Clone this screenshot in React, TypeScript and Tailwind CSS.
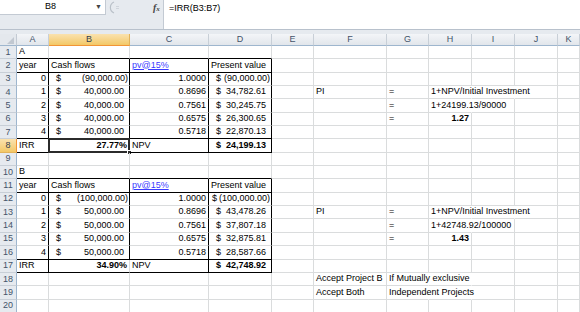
import clsx from "clsx";

type C = {
  v?: string;
  al?: "l" | "r";
  acct?: string;
  tight?: boolean;
  bold?: boolean;
  link?: boolean;
  dr?: boolean;
  db?: boolean;
  hr?: boolean;
  sel?: boolean;
};

const widths = [
  "w-[32px]",
  "w-[81px]",
  "w-[79px]",
  "w-[63px]",
  "w-[42px]",
  "w-[73px]",
  "w-[42px]",
  "w-[43px]",
  "w-[43px]",
  "w-[43px]",
  "w-[22px]",
];
const letters = ["A", "B", "C", "D", "E", "F", "G", "H", "I", "J", "K"];

const money = (n: string, o: Partial<C> = {}): C => ({ acct: n, dr: true, ...o });
const num = (n: string, o: Partial<C> = {}): C => ({ v: n, al: "r", dr: true, ...o });

function section(
  title: string,
  flows: string[],
  pvs: string[],
  irr: string,
  npv: string,
  sel: boolean
): Record<number, C>[] {
  const factors = ["1.0000", "0.8696", "0.7561", "0.6575", "0.5718"];
  const rows: Record<number, C>[] = [];
  rows.push({ 0: { v: title, db: true }, 1: { db: true }, 2: { db: true }, 3: { db: true } });
  rows.push({
    0: { v: "year", dr: true, db: true },
    1: { v: "Cash flows", dr: true, db: true },
    2: { v: "pv@15%", link: true, dr: true, db: true },
    3: { v: "Present value", dr: true, db: true },
  });
  for (let i = 0; i < 5; i++) {
    const db = i === 4;
    rows.push({
      0: num(String(i), { db }),
      1: money(flows[i], { db }),
      2: num(factors[i], { db }),
      3: money(pvs[i], { db, tight: pvs[i].length > 11 }),
    });
  }
  rows.push({
    0: { v: "IRR", dr: true, db: true },
    1: { v: irr, al: "r", bold: true, db: true, dr: sel, sel },
    2: { v: "NPV", dr: true, db: true },
    3: money(npv, { bold: true, db: true }),
  });
  return rows;
}

const secA = section(
  "A",
  ["(90,000.00)", "40,000.00", "40,000.00", "40,000.00", "40,000.00"],
  ["(90,000.00)", "34,782.61", "30,245.75", "26,300.65", "22,870.13"],
  "27.77%",
  "24,199.13",
  true
);
const secB = section(
  "B",
  ["(100,000.00)", "50,000.00", "50,000.00", "50,000.00", "50,000.00"],
  ["(100,000.00)", "43,478.26", "37,807.18", "32,875.81", "28,587.66"],
  "34.90%",
  "42,748.92",
  false
);

const rows: Record<number, C>[] = [...secA, {}, ...secB, {}, {}, {}];

// right hand notes
Object.assign(rows[3], {
  5: { v: "PI" },
  6: { v: "=" },
  7: { v: "1+NPV/Initial Investment", hr: true },
  8: { hr: true },
});
Object.assign(rows[4], { 6: { v: "=" }, 7: { v: "1+24199.13/90000", hr: true } });
Object.assign(rows[5], { 6: { v: "=" }, 7: { v: "1.27", al: "r", bold: true } });
Object.assign(rows[12], {
  5: { v: "PI" },
  6: { v: "=" },
  7: { v: "1+NPV/Initial Investment", hr: true },
  8: { hr: true },
});
Object.assign(rows[13], { 6: { v: "=" }, 7: { v: "1+42748.92/100000", hr: true } });
Object.assign(rows[14], { 6: { v: "=" }, 7: { v: "1.43", al: "r", bold: true } });
Object.assign(rows[17], {
  5: { v: "Accept Project B" },
  6: { v: "If Mutually exclusive", hr: true },
  7: { hr: true },
});
Object.assign(rows[18], {
  5: { v: "Accept Both" },
  6: { v: "Independent Projects", hr: true },
  7: { hr: true },
});

function Cell({ c, w }: { c: C; w: string }) {
  return (
    <div
      className={clsx(
        w,
        "relative shrink-0 h-full border-r border-b flex items-end pb-[1px] leading-[11px] whitespace-nowrap",
        c.dr ? "border-r-black" : c.hr ? "border-r-transparent" : "border-r-[#dadcdd]",
        c.db ? "border-b-black" : "border-b-[#dadcdd]",
        c.bold && "font-bold",
        c.al === "r" ? "justify-end pr-[2px]" : "pl-[2px]"
      )}
    >
      {c.acct !== undefined ? (
        <div
          className={clsx(
            "flex w-full justify-between",
            c.tight ? "pl-[1px] pr-[1px]" : "pl-[5px]",
            !c.tight && (c.acct.endsWith(")") ? "pr-[1px]" : "pr-[5px]")
          )}
        >
          <span>$</span>
          <span>{c.acct}</span>
        </div>
      ) : c.link ? (
        <span className="text-[#3b3bff] underline">{c.v}</span>
      ) : (
        <span>{c.v}</span>
      )}
      {c.sel && (
        <>
          <div className="absolute -left-[1px] -top-[1px] -right-[1px] -bottom-[1px] border-2 border-[#2b2b2b]" />
          <div className="absolute -right-[3px] -bottom-[3px] w-[5px] h-[5px] bg-[#2b2b2b] border border-white" />
        </>
      )}
    </div>
  );
}

export default function App() {
  return (
    <div className="w-[580px] h-[312px] overflow-hidden bg-white text-[9px] text-black font-['Liberation_Sans',Arial,sans-serif]">
      {/* formula bar */}
      <div className="flex h-[30px] bg-[#e6eaef] border-b border-[#b8c1cc]">
        <div className="w-[163px] shrink-0">
          <div className="flex h-[15px] items-center">
            <div className="w-[106px] h-[15px] bg-white border-r border-b border-[#c3cad3] flex items-center">
              <span className="flex-1 text-center pl-[6px]">B8</span>
              <span className="w-[10px] text-[7px] text-[#444]">▼</span>
            </div>
            <svg width="14" height="13" viewBox="0 0 14 13" className="ml-[2px]">
              <path d="M6 1 A6 6 0 0 0 6 12" fill="none" stroke="#b9c0c8" strokeWidth="1.2" />
              <path d="M8 5.5h3M8 7.5h3" stroke="#c9ced5" strokeWidth="0.8" />
            </svg>
            <span className="ml-[31px] font-['Liberation_Serif',serif] italic font-bold text-[10px] text-[#444]">
              f<span className="text-[7px]">x</span>
            </span>
          </div>
        </div>
        <div className="flex-1 bg-white border-l border-[#c3cad3] pl-[5px] pt-[3px] leading-[11px]">=IRR(B3:B7)</div>
      </div>
      <div className="h-[4px] bg-[#e6eaef]" />

      {/* column headers */}
      <div className="flex h-[12px]">
        <div className="relative w-[17px] shrink-0 bg-[#e4e8ed] border-r border-b border-r-[#c3cad3] border-b-[#9eb6ce]">
          <svg width="7" height="7" className="absolute right-[2px] bottom-[1px]">
            <path d="M7 0 L7 7 L0 7 Z" fill="#c1c8d1" />
          </svg>
        </div>
        {letters.map((l, i) => (
          <div
            key={l}
            className={clsx(
              widths[i],
              "shrink-0 h-full border-r border-b flex items-center justify-center leading-none",
              i === 1
                ? "bg-gradient-to-b from-[#fae2ae] to-[#f3c865] border-r-[#e2b35a] border-b-[#f29436] text-[#33404f]"
                : "bg-gradient-to-b from-[#f3f5f8] to-[#e2e6eb] border-r-[#c8cfd7] border-b-[#9eb6ce] text-[#43536a]"
            )}
          >
            {l}
          </div>
        ))}
      </div>

      {/* rows */}
      {rows.map((r, ri) => (
        <div key={ri} className="flex h-[13.35px]">
          <div
            className={clsx(
              "w-[17px] shrink-0 h-full border-r border-b flex items-center justify-center leading-none",
              ri === 7
                ? "bg-gradient-to-b from-[#fae2ae] to-[#f3c865] border-r-[#f29436] border-b-[#e2b35a] text-[#33404f]"
                : "bg-[#e6eaef] border-r-[#9eb6ce] border-b-[#c8cfd7] text-[#43536a]"
            )}
          >
            {ri + 1}
          </div>
          {widths.map((w, ci) => (
            <Cell key={ci} c={r[ci] ?? {}} w={w} />
          ))}
        </div>
      ))}
    </div>
  );
}
